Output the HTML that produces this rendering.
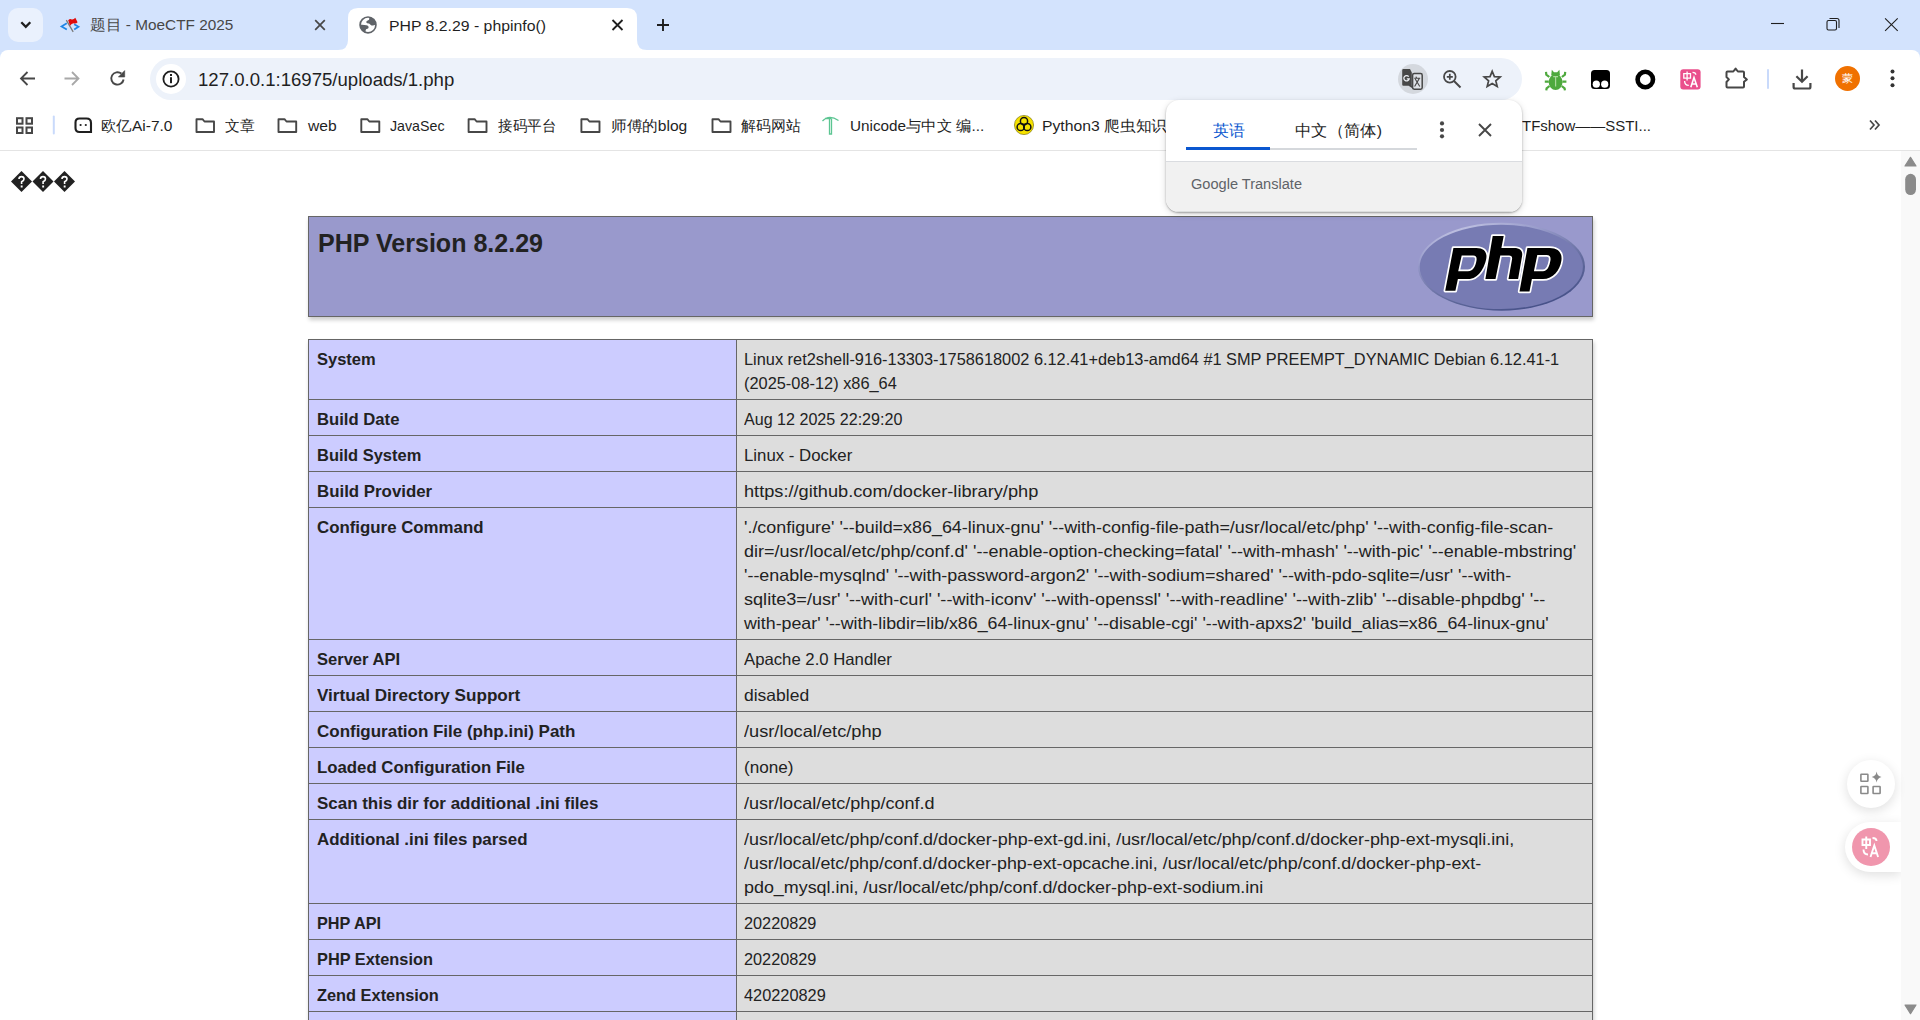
<!DOCTYPE html>
<html><head><meta charset="utf-8">
<style>
*{box-sizing:border-box}
html,body{margin:0;padding:0}
body{width:1920px;height:1020px;overflow:hidden;position:relative;background:#fff;font-family:"Liberation Sans",sans-serif;color:#1f1f1f}
.a{position:absolute}
svg.i{position:absolute;overflow:visible}
.t{position:absolute;white-space:pre}
</style></head><body>
<!-- ===== tab strip ===== -->
<div class="a" style="left:0;top:0;width:1920px;height:62px;background:#d3e3fd"></div>
<!-- toolbar + bookmarks white with rounded top corners -->
<div class="a" style="left:0;top:50px;width:1920px;height:100px;background:#fff;border-radius:8px 8px 0 0"></div>
<div class="a" style="left:0;top:150px;width:1920px;height:1px;background:#e4e4e4"></div>
<!-- tab search button -->
<div class="a" style="left:8px;top:8px;width:35px;height:34px;border-radius:10px;background:#eaf1fd"></div>
<svg class="i" style="left:0;top:0" width="50" height="50"><path d="M21.3 22.3 L25.8 26.8 L30.3 22.3" fill="none" stroke="#1f1f1f" stroke-width="2.3"/></svg>
<!-- inactive tab favicon (MoeCTF) -->
<svg class="i" style="left:58px;top:15px" width="24" height="20">
 <path d="M8.8 8.3 L3.5 11.5 L8.8 14.6" fill="none" stroke="#1f86e6" stroke-width="1.7"/>
 <path d="M16.2 9.2 L20.5 11.8 L16.2 14.4" fill="none" stroke="#1f86e6" stroke-width="1.7"/>
 <path d="M8.3 5.2 L15.2 16.8" stroke="#7a7a7a" stroke-width="1.3"/>
 <path d="M10.2 5.2 Q12 3.4 13.8 4.4 Q15.8 4.6 17.3 2.8 L19.6 7.3 Q18 9 15.5 8.3 Q13.6 8.3 12 10.8 Z" fill="#e00b0b"/>
</svg>
<!-- inactive close -->
<svg class="i" style="left:0;top:0" width="700" height="50"><path d="M315.2 20.2 L324.8 29.8 M324.8 20.2 L315.2 29.8" stroke="#474747" stroke-width="1.7"/></svg>
<!-- active tab shape -->
<svg class="i" style="left:330px;top:0" width="345" height="52">
 <path d="M8 50 Q18 50 18 40 L18 18 Q18 8 28 8 L297 8 Q307 8 307 18 L307 40 Q307 50 317 50 Z" fill="#fff"/>
</svg>
<!-- globe -->
<svg class="i" style="left:359px;top:16px" width="18" height="18" viewBox="0 0 18 18">
 <defs><clipPath id="gc"><circle cx="9" cy="8.9" r="8"/></clipPath></defs>
 <circle cx="9" cy="8.9" r="8.75" fill="#5f6368"/>
 <circle cx="9" cy="8.9" r="7.1" fill="#fff"/>
 <g clip-path="url(#gc)" fill="#5f6368">
  <path d="M10.3 0 L10.2 3.3 C10 4.5 8.4 4.4 7.6 5.2 C7 6 7.3 7 8.2 7.3 L9.8 7.5 C10.8 7.7 11.2 8.7 12.1 9.3 C13.1 9.9 14.6 9.7 17 8.2 L18 0 Z"/>
  <path d="M0 8.5 L7.4 9.3 C8.8 9.5 9.6 10.3 9.6 11.3 C9.6 12.3 8.8 12.9 7.6 13.1 C6.6 13.3 6.4 14.6 6.8 18 L0 18 Z"/>
 </g>
</svg>
<!-- active close + new tab -->
<svg class="i" style="left:0;top:0" width="700" height="50">
 <path d="M612.5 20 L622.5 30 M622.5 20 L612.5 30" stroke="#1f1f1f" stroke-width="1.8"/>
 <path d="M663 19 L663 31 M657 25 L669 25" stroke="#1f1f1f" stroke-width="1.9"/>
</svg>
<!-- window controls -->
<svg class="i" style="left:1740px;top:0" width="180" height="50">
 <path d="M31 23.5 L44 23.5" stroke="#1f1f1f" stroke-width="1.1"/>
 <rect x="87" y="20.5" width="9.5" height="9.5" rx="1.5" fill="none" stroke="#1f1f1f" stroke-width="1.1"/>
 <path d="M89.5 18.5 L97 18.5 Q99 18.5 99 20.5 L99 28" fill="none" stroke="#1f1f1f" stroke-width="1.1"/>
 <path d="M145.1 18.4 L157.7 30.8 M157.7 18.4 L145.1 30.8" stroke="#1f1f1f" stroke-width="1.1"/>
</svg>
<!-- ===== toolbar ===== -->
<svg class="i" style="left:0;top:50px" width="150" height="50">
 <path d="M35 28.5 L21 28.5 M27.5 22 L21 28.5 L27.5 35" fill="none" stroke="#474747" stroke-width="1.8"/>
 <path d="M64.5 28.5 L78.5 28.5 M72 22 L78.5 28.5 L72 35" fill="none" stroke="#a8a8a8" stroke-width="1.8"/>
 <path d="M123.6 29.5 A6.2 6.2 0 1 1 121.4 23.6" fill="none" stroke="#474747" stroke-width="1.9"/>
 <path d="M124.7 20.6 L124.7 27 L118.4 27 Z" fill="#474747" stroke="#474747" stroke-width="0.6" stroke-linejoin="round"/>
</svg>
<div class="a" style="left:150px;top:58px;width:1372px;height:42px;border-radius:21px;background:#edf2fa"></div>
<div class="a" style="left:156px;top:64px;width:30px;height:30px;border-radius:15px;background:#fff"></div>
<svg class="i" style="left:150px;top:58px" width="50" height="42">
 <circle cx="21" cy="21" r="7.6" fill="none" stroke="#1f1f1f" stroke-width="1.8"/>
 <rect x="20" y="19.2" width="2" height="6" fill="#1f1f1f"/><rect x="20" y="16" width="2" height="2" fill="#1f1f1f"/>
</svg>
<!-- translate chip in omnibox -->
<div class="a" style="left:1398px;top:64px;width:30px;height:30px;border-radius:15px;background:#d4d8de"></div>
<svg class="i" style="left:1398px;top:64px" width="30" height="30">
 <rect x="14.6" y="9.6" width="9.6" height="15.6" rx="1.6" fill="#dfe2e7" stroke="#474747" stroke-width="1.5"/>
 <path d="M16.2 14.2 L22.2 14.2 M18 12.6 L18.6 14.2 M21.2 14.6 L16.6 22.5 M17.2 15 L21.8 22.5" fill="none" stroke="#474747" stroke-width="1.1"/>
 <path d="M5.4 5.1 L12 5.1 L13.8 8.4 L13.8 21.7 L15.9 25.2 L10.6 21.7 L5.4 21.7 Q4.2 21.7 4.2 20.5 L4.2 6.3 Q4.2 5.1 5.4 5.1 Z" fill="#474747"/>
 <path d="M10.7 12.6 A2.7 2.7 0 1 0 11.2 14.8 L8.8 14.8" fill="none" stroke="#eceef2" stroke-width="1.3"/>
</svg>
<svg class="i" style="left:1430px;top:58px" width="90" height="42">
 <circle cx="19.8" cy="18.8" r="5.8" fill="none" stroke="#474747" stroke-width="1.8"/>
 <path d="M24 23 L30.5 29.5" stroke="#474747" stroke-width="2"/>
 <path d="M19.8 15.8 L19.8 21.8 M16.8 18.8 L22.8 18.8" stroke="#474747" stroke-width="1.7"/>
 <path d="M62.2 13.3 L64.4 18.6 L70.2 19 L65.8 22.8 L67.2 28.4 L62.2 25.4 L57.2 28.4 L58.6 22.8 L54.2 19 L60 18.6 Z" fill="none" stroke="#474747" stroke-width="1.7" stroke-linejoin="miter"/>
</svg>
<!-- extension icons -->
<svg class="i" style="left:1540px;top:60px" width="240" height="40">
 <!-- bug -->
 <g fill="#4ea93d">
  <ellipse cx="15.6" cy="22.2" rx="6.9" ry="7.9"/>
  <path d="M11.2 15.5 L11.8 9.8 L14 12.3 L17.2 12.3 L19.4 9.8 L20 15.5 Z"/>
  <path d="M9.3 17 L6.3 14.6 L6 11.8 M8.8 21.6 L4.8 21.6 M9.5 26 L6.6 28.4 L6.3 30.4 M21.9 17 L24.9 14.6 L25.2 11.8 M22.4 21.6 L26.4 21.6 M21.7 26 L24.6 28.4 L24.9 30.4" stroke="#4ea93d" stroke-width="2.2" fill="none"/>
 </g>
 <path d="M13.2 16.6 L18 16.6 M15.6 16.6 L15.6 26.5" stroke="#aad99b" stroke-width="1.2"/>
 <!-- tampermonkey -->
 <rect x="51" y="10" width="19" height="19" rx="3.5" fill="#000"/>
 <circle cx="56.3" cy="24.2" r="3.6" fill="#fff"/><circle cx="64.7" cy="24.2" r="3.6" fill="#fff"/>
 <!-- ring -->
 <circle cx="105.3" cy="19.5" r="7.7" fill="none" stroke="#000" stroke-width="4.6"/>
 <!-- pink translate -->
 <rect x="140.3" y="9.3" width="20.3" height="20.3" rx="3" fill="#ea4f8c"/>
 <path d="M143.8 13.6 L150.5 13.6 L150.5 18.2 L143.8 18.2 Z M147.1 11.6 L147.1 20.6" fill="none" stroke="#fff" stroke-width="1.3"/>
 <path d="M152.5 12.3 Q155.8 12.3 155.8 14.8" fill="none" stroke="#fff" stroke-width="1.3"/>
 <path d="M144.6 21 Q144.6 25.3 148.8 25.3" fill="none" stroke="#fff" stroke-width="1.3"/>
 <path d="M150.8 27.3 L154 17.5 L157.3 27.3 M151.8 24 L156.3 24" fill="none" stroke="#fff" stroke-width="1.6"/>
 <!-- puzzle -->
 <path d="M187.5 11.5 L193.3 11.5 L195.6 8.6 L197.9 11.5 L203 11.5 Q204 11.5 204 12.5 L204 17 L206.9 19.4 L204 21.8 L204 26.5 Q204 27.5 203 27.5 L187.5 27.5 Q186.5 27.5 186.5 26.5 L186.5 22 L188.9 19.4 L186.5 17 L186.5 12.5 Q186.5 11.5 187.5 11.5 Z" fill="none" stroke="#474747" stroke-width="2" stroke-linejoin="round"/>
</svg>
<div class="a" style="left:1767px;top:69px;width:2px;height:20px;border-radius:1px;background:#c9dafb"></div>
<svg class="i" style="left:1780px;top:60px" width="140" height="40">
 <path d="M22 9.5 L22 21.8 M16.4 16.2 L22 21.8 L27.6 16.2" fill="none" stroke="#474747" stroke-width="2.2"/>
 <path d="M13.6 23 L13.6 27 Q13.6 28.5 15.1 28.5 L28.9 28.5 Q30.4 28.5 30.4 27 L30.4 23" fill="none" stroke="#474747" stroke-width="2.2"/>
 <circle cx="67.5" cy="18.5" r="12.5" fill="#f07100"/>
 <circle cx="112.5" cy="11.4" r="2" fill="#333"/><circle cx="112.5" cy="18.3" r="2" fill="#333"/><circle cx="112.5" cy="25.2" r="2" fill="#333"/>
</svg>
<div class="t" style="left:1842px;top:73px;font-size:11px;line-height:11px;color:#fff">蒙</div>
<!-- ===== bookmarks bar ===== -->
<svg class="i" style="left:0;top:100px" width="1900" height="50">
 <g fill="none" stroke="#474747" stroke-width="2">
  <rect x="17" y="18.2" width="5.5" height="5.5"/><rect x="26.5" y="18.2" width="5.5" height="5.5"/>
  <rect x="17" y="27.5" width="5.5" height="5.5"/><rect x="26.5" y="27.5" width="5.5" height="5.5"/>
 </g>
 <rect x="52.8" y="15.5" width="2" height="19" rx="1" fill="#c9dafb"/>
 <path d="M79.5 18.5 L86.5 18.5 Q91 18.5 91 23 L91 32 L79.5 32 Q75.5 32 75.5 28 L75.5 22.5 Q75.5 18.5 79.5 18.5 Z" fill="none" stroke="#1f1f1f" stroke-width="2.1"/>
 <circle cx="80.6" cy="25" r="1.1" fill="#1f1f1f"/><circle cx="85.8" cy="25" r="1.1" fill="#1f1f1f"/>
 <g fill="none" stroke="#474747" stroke-width="1.9" stroke-linejoin="round">
  <path d="M196.5 19.2 L202.5 19.2 L204.5 21.5 L214 21.5 L214 32 L196.5 32 Z"/>
  <path d="M278.5 19.2 L284.5 19.2 L286.5 21.5 L296.2 21.5 L296.2 32 L278.5 32 Z"/>
  <path d="M361.3 19.2 L367.3 19.2 L369.3 21.5 L379.3 21.5 L379.3 32 L361.3 32 Z"/>
  <path d="M468.6 19.2 L474.6 19.2 L476.6 21.5 L486.5 21.5 L486.5 32 L468.6 32 Z"/>
  <path d="M581.4 19.2 L587.4 19.2 L589.4 21.5 L599.5 21.5 L599.5 32 L581.4 32 Z"/>
  <path d="M712.5 19.2 L718.5 19.2 L720.5 21.5 L730.5 21.5 L730.5 32 L712.5 32 Z"/>
 </g>
 <path d="M822.5 21 Q829 14 838.5 20.5 M825 18.5 L831 18.5 M829.5 18.5 L829.5 34 L831.5 34 L831.5 18.5" fill="none" stroke="#5cc592" stroke-width="1.3"/>
 <circle cx="1024" cy="25" r="9.6" fill="#f6e200" stroke="#6b6400" stroke-width="0.6"/>
 <g fill="none" stroke="#111" stroke-width="1.5">
  <circle cx="1024" cy="21.2" r="3.6"/><circle cx="1020.7" cy="27" r="3.6"/><circle cx="1027.3" cy="27" r="3.6"/>
 </g>
 <circle cx="1024" cy="25" r="1.4" fill="#111"/>
 <path d="M1870 20.5 L1874 25 L1870 29.5 M1875 20.5 L1879 25 L1875 29.5" fill="none" stroke="#474747" stroke-width="1.7"/>
</svg>

<!-- ===== content extras ===== -->
<svg class="i" style="left:0;top:160px" width="90" height="40">
 <g fill="#222">
  <path d="M21.5 11 L32 21.5 L21.5 32 L11 21.5 Z"/>
  <path d="M43 11 L53.5 21.5 L43 32 L32.5 21.5 Z"/>
  <path d="M64.5 11 L75 21.5 L64.5 32 L54 21.5 Z"/>
 </g>
 <g fill="none" stroke="#fff" stroke-width="1.6">
  <path d="M19 19 Q19 16.6 21.5 16.6 Q24 16.6 24 19 Q24 20.6 21.6 21.8 L21.6 24"/>
  <path d="M40.5 19 Q40.5 16.6 43 16.6 Q45.5 16.6 45.5 19 Q45.5 20.6 43.1 21.8 L43.1 24"/>
  <path d="M62 19 Q62 16.6 64.5 16.6 Q67 16.6 67 19 Q67 20.6 64.6 21.8 L64.6 24"/>
 </g>
 <g fill="#fff"><rect x="20.7" y="25.5" width="1.9" height="2"/><rect x="42.2" y="25.5" width="1.9" height="2"/><rect x="63.7" y="25.5" width="1.9" height="2"/></g>
</svg>
<!-- scrollbar -->
<div class="a" style="left:1901px;top:151px;width:19px;height:869px;background:#f9f9f9"></div>
<svg class="i" style="left:1901px;top:151px" width="19" height="869">
 <path d="M4 15 L9.5 6.3 L15 15 Z" fill="#8b8b8b" stroke="#8b8b8b" stroke-width="1.2" stroke-linejoin="round"/>
 <rect x="4.2" y="22.8" width="10.8" height="21.2" rx="5.4" fill="#8b8b8b"/>
 <path d="M4 854 L9.5 862.7 L15 854 Z" fill="#8b8b8b" stroke="#8b8b8b" stroke-width="1.2" stroke-linejoin="round"/>
</svg>
<!-- floating buttons -->
<div class="a" style="left:1846.6px;top:760.4px;width:48px;height:48px;border-radius:24px;background:#fff;box-shadow:0 3px 12px rgba(0,0,0,0.13)"></div>
<svg class="i" style="left:1846.6px;top:760.4px" width="48" height="48">
 <g fill="none" stroke="#8a8a8a" stroke-width="1.6">
  <rect x="13.9" y="14.3" width="7" height="7" rx="0.5"/>
  <rect x="13.9" y="26.5" width="7" height="7" rx="0.5"/>
  <rect x="26.1" y="26.5" width="7" height="7" rx="0.5"/>
 </g>
 <path d="M29.6 11.5 Q30.2 16 34.5 17 Q30.2 18 29.6 22.5 Q29 18 24.7 17 Q29 16 29.6 11.5 Z" fill="#8a8a8a"/>
</svg>
<div class="a" style="left:1845px;top:822px;width:56px;height:50px;border-radius:25px 0 0 25px;background:#fff;box-shadow:0 3px 12px rgba(0,0,0,0.13)"></div>
<div class="a" style="left:1901px;top:815px;width:19px;height:70px;background:#f9f9f9"></div>
<div class="a" style="left:1851.7px;top:828px;width:38px;height:38px;border-radius:19px;background:#f096ad"></div>
<svg class="i" style="left:1851.7px;top:828px" width="38" height="38">
 <g fill="none" stroke="#fff" stroke-width="1.9">
  <path d="M10.5 11.5 L18 11.5 L18 17 L10.5 17 Z M14.25 8.5 L14.25 21"/>
  <path d="M20.5 10 Q24.5 10 24.5 13"/>
  <path d="M11.5 21.5 Q11.5 26.5 16 26.5"/>
  <path d="M18.5 29 L22.3 17.5 L26.1 29 M19.7 25.2 L24.9 25.2"/>
 </g>
</svg>

<!-- php logo -->
<svg class="i" style="left:0;top:0;z-index:1" width="1920" height="400">
 <defs>
  <radialGradient id="lg" cx="0.3" cy="0.15" r="0.95">
   <stop offset="0" stop-color="#c4c6e4"/><stop offset="0.45" stop-color="#9a9dcc"/><stop offset="0.8" stop-color="#5d6699"/><stop offset="1" stop-color="#3f4a83"/>
  </radialGradient>
 </defs>
 <ellipse cx="1501.5" cy="266.7" rx="83.5" ry="44" fill="url(#lg)"/>
 <ellipse cx="1501.3" cy="266.9" rx="81.6" ry="42.2" fill="#777bb3"/>
 <g fill="#000" stroke="#fff" stroke-width="3.4" stroke-linejoin="round" fill-rule="evenodd" paint-order="stroke">
  <path d="M1453.4 247.9 L1476.4 247.9 C1484 247.9 1487.5 252 1486.2 259 C1484.6 267 1479 279.1 1468 279.1 L1457.9 279.1 L1455.4 290.8 L1445.2 290.8 Z M1461.7 255.5 L1473.2 255.5 C1476.5 255.5 1477 258 1476.4 261 C1475.6 265.5 1473.5 271.2 1468 271.2 L1458.2 271.2 Z"/>
  <path d="M1492.7 235.9 L1503.7 235.9 L1501.4 247.9 L1514 247.9 C1521 247.9 1523 251.5 1522 256.5 L1518.1 279.1 L1508.5 279.1 L1512 259.5 C1512.5 256.5 1511.5 255.4 1509 255.4 L1500.3 255.4 L1495.5 279.1 L1485.4 279.1 Z"/>
  <path d="M1527.4 247.9 L1549.7 247.9 C1558 247.9 1562.5 252.5 1561.4 260.5 C1560 270.5 1553 279.1 1543 279.1 L1531.9 279.1 L1529.5 291.5 L1519.5 291.5 Z M1537.3 255.1 L1546.5 255.1 C1550 255.1 1551 257.5 1550.4 260.5 C1549.5 266 1547.5 271.2 1543 271.2 L1533.9 271.2 Z"/>
 </g>
</svg>

<div class="a" style="left:308px;top:216px;width:1285px;height:101px;background:#99c;border:1px solid #666;box-shadow:1.4px 2.75px 4px #ccc"></div>
<div class="a" style="left:308px;top:339px;width:1285px;height:701px;box-shadow:1.4px 2.75px 4px #ccc;background:#666"></div>
<div class="a" style="left:309px;top:340px;width:427px;height:59px;background:#ccf;"></div>
<div class="a" style="left:737px;top:340px;width:855px;height:59px;background:#ddd;"></div>
<div class="a" style="left:309px;top:400px;width:427px;height:35px;background:#ccf;"></div>
<div class="a" style="left:737px;top:400px;width:855px;height:35px;background:#ddd;"></div>
<div class="a" style="left:309px;top:436px;width:427px;height:35px;background:#ccf;"></div>
<div class="a" style="left:737px;top:436px;width:855px;height:35px;background:#ddd;"></div>
<div class="a" style="left:309px;top:472px;width:427px;height:35px;background:#ccf;"></div>
<div class="a" style="left:737px;top:472px;width:855px;height:35px;background:#ddd;"></div>
<div class="a" style="left:309px;top:508px;width:427px;height:131px;background:#ccf;"></div>
<div class="a" style="left:737px;top:508px;width:855px;height:131px;background:#ddd;"></div>
<div class="a" style="left:309px;top:640px;width:427px;height:35px;background:#ccf;"></div>
<div class="a" style="left:737px;top:640px;width:855px;height:35px;background:#ddd;"></div>
<div class="a" style="left:309px;top:676px;width:427px;height:35px;background:#ccf;"></div>
<div class="a" style="left:737px;top:676px;width:855px;height:35px;background:#ddd;"></div>
<div class="a" style="left:309px;top:712px;width:427px;height:35px;background:#ccf;"></div>
<div class="a" style="left:737px;top:712px;width:855px;height:35px;background:#ddd;"></div>
<div class="a" style="left:309px;top:748px;width:427px;height:35px;background:#ccf;"></div>
<div class="a" style="left:737px;top:748px;width:855px;height:35px;background:#ddd;"></div>
<div class="a" style="left:309px;top:784px;width:427px;height:35px;background:#ccf;"></div>
<div class="a" style="left:737px;top:784px;width:855px;height:35px;background:#ddd;"></div>
<div class="a" style="left:309px;top:820px;width:427px;height:83px;background:#ccf;"></div>
<div class="a" style="left:737px;top:820px;width:855px;height:83px;background:#ddd;"></div>
<div class="a" style="left:309px;top:904px;width:427px;height:35px;background:#ccf;"></div>
<div class="a" style="left:737px;top:904px;width:855px;height:35px;background:#ddd;"></div>
<div class="a" style="left:309px;top:940px;width:427px;height:35px;background:#ccf;"></div>
<div class="a" style="left:737px;top:940px;width:855px;height:35px;background:#ddd;"></div>
<div class="a" style="left:309px;top:976px;width:427px;height:35px;background:#ccf;"></div>
<div class="a" style="left:737px;top:976px;width:855px;height:35px;background:#ddd;"></div>
<div class="a" style="left:309px;top:1012px;width:427px;height:35px;background:#ccf;"></div>
<div class="a" style="left:737px;top:1012px;width:855px;height:35px;background:#ddd;"></div>
<div class="t" style="left:318px;top:230.84px;font-family:'Liberation Sans',sans-serif;font-size:25px;line-height:25px;font-weight:bold;color:#222;transform:scaleX(1.0015);transform-origin:0 0;">PHP Version 8.2.29</div>
<div class="t" style="left:317px;top:350.73px;font-family:'Liberation Sans',sans-serif;font-size:16.5px;line-height:16.5px;font-weight:bold;color:#222;transform:scaleX(0.9999);transform-origin:0 0;">System</div>
<div class="t" style="left:743.8px;top:350.73px;font-family:'Liberation Sans',sans-serif;font-size:16.5px;line-height:16.5px;font-weight:normal;color:#222;transform:scaleX(0.9906);transform-origin:0 0;">Linux ret2shell-916-13303-1758618002 6.12.41+deb13-amd64 #1 SMP PREEMPT_DYNAMIC Debian 6.12.41-1</div>
<div class="t" style="left:743.8px;top:374.73px;font-family:'Liberation Sans',sans-serif;font-size:16.5px;line-height:16.5px;font-weight:normal;color:#222;transform:scaleX(0.9915);transform-origin:0 0;">(2025-08-12) x86_64</div>
<div class="t" style="left:317px;top:410.73px;font-family:'Liberation Sans',sans-serif;font-size:16.5px;line-height:16.5px;font-weight:bold;color:#222;transform:scaleX(1.0099);transform-origin:0 0;">Build Date</div>
<div class="t" style="left:743.8px;top:410.73px;font-family:'Liberation Sans',sans-serif;font-size:16.5px;line-height:16.5px;font-weight:normal;color:#222;transform:scaleX(0.9753);transform-origin:0 0;">Aug 12 2025 22:29:20</div>
<div class="t" style="left:317px;top:446.73px;font-family:'Liberation Sans',sans-serif;font-size:16.5px;line-height:16.5px;font-weight:bold;color:#222;transform:scaleX(0.9978);transform-origin:0 0;">Build System</div>
<div class="t" style="left:743.8px;top:446.73px;font-family:'Liberation Sans',sans-serif;font-size:16.5px;line-height:16.5px;font-weight:normal;color:#222;transform:scaleX(1.0181);transform-origin:0 0;">Linux - Docker</div>
<div class="t" style="left:317px;top:482.73px;font-family:'Liberation Sans',sans-serif;font-size:16.5px;line-height:16.5px;font-weight:bold;color:#222;transform:scaleX(1.0214);transform-origin:0 0;">Build Provider</div>
<div class="t" style="left:743.8px;top:482.73px;font-family:'Liberation Sans',sans-serif;font-size:16.5px;line-height:16.5px;font-weight:normal;color:#222;transform:scaleX(1.1027);transform-origin:0 0;">https://github.com/docker-library/php</div>
<div class="t" style="left:317px;top:518.73px;font-family:'Liberation Sans',sans-serif;font-size:16.5px;line-height:16.5px;font-weight:bold;color:#222;transform:scaleX(1.0204);transform-origin:0 0;">Configure Command</div>
<div class="t" style="left:743.8px;top:518.73px;font-family:'Liberation Sans',sans-serif;font-size:16.5px;line-height:16.5px;font-weight:normal;color:#222;transform:scaleX(1.0852);transform-origin:0 0;">&#x27;./configure&#x27; &#x27;--build=x86_64-linux-gnu&#x27; &#x27;--with-config-file-path=/usr/local/etc/php&#x27; &#x27;--with-config-file-scan-</div>
<div class="t" style="left:743.8px;top:542.73px;font-family:'Liberation Sans',sans-serif;font-size:16.5px;line-height:16.5px;font-weight:normal;color:#222;transform:scaleX(1.0908);transform-origin:0 0;">dir=/usr/local/etc/php/conf.d&#x27; &#x27;--enable-option-checking=fatal&#x27; &#x27;--with-mhash&#x27; &#x27;--with-pic&#x27; &#x27;--enable-mbstring&#x27;</div>
<div class="t" style="left:743.8px;top:566.73px;font-family:'Liberation Sans',sans-serif;font-size:16.5px;line-height:16.5px;font-weight:normal;color:#222;transform:scaleX(1.0853);transform-origin:0 0;">&#x27;--enable-mysqlnd&#x27; &#x27;--with-password-argon2&#x27; &#x27;--with-sodium=shared&#x27; &#x27;--with-pdo-sqlite=/usr&#x27; &#x27;--with-</div>
<div class="t" style="left:743.8px;top:590.73px;font-family:'Liberation Sans',sans-serif;font-size:16.5px;line-height:16.5px;font-weight:normal;color:#222;transform:scaleX(1.0969);transform-origin:0 0;">sqlite3=/usr&#x27; &#x27;--with-curl&#x27; &#x27;--with-iconv&#x27; &#x27;--with-openssl&#x27; &#x27;--with-readline&#x27; &#x27;--with-zlib&#x27; &#x27;--disable-phpdbg&#x27; &#x27;--</div>
<div class="t" style="left:743.8px;top:614.73px;font-family:'Liberation Sans',sans-serif;font-size:16.5px;line-height:16.5px;font-weight:normal;color:#222;transform:scaleX(1.0780);transform-origin:0 0;">with-pear&#x27; &#x27;--with-libdir=lib/x86_64-linux-gnu&#x27; &#x27;--disable-cgi&#x27; &#x27;--with-apxs2&#x27; &#x27;build_alias=x86_64-linux-gnu&#x27;</div>
<div class="t" style="left:317px;top:650.73px;font-family:'Liberation Sans',sans-serif;font-size:16.5px;line-height:16.5px;font-weight:bold;color:#222;transform:scaleX(1.0017);transform-origin:0 0;">Server API</div>
<div class="t" style="left:743.8px;top:650.73px;font-family:'Liberation Sans',sans-serif;font-size:16.5px;line-height:16.5px;font-weight:normal;color:#222;transform:scaleX(1.0133);transform-origin:0 0;">Apache 2.0 Handler</div>
<div class="t" style="left:317px;top:686.73px;font-family:'Liberation Sans',sans-serif;font-size:16.5px;line-height:16.5px;font-weight:bold;color:#222;transform:scaleX(1.0372);transform-origin:0 0;">Virtual Directory Support</div>
<div class="t" style="left:743.8px;top:686.73px;font-family:'Liberation Sans',sans-serif;font-size:16.5px;line-height:16.5px;font-weight:normal;color:#222;transform:scaleX(1.0591);transform-origin:0 0;">disabled</div>
<div class="t" style="left:317px;top:722.73px;font-family:'Liberation Sans',sans-serif;font-size:16.5px;line-height:16.5px;font-weight:bold;color:#222;transform:scaleX(1.0289);transform-origin:0 0;">Configuration File (php.ini) Path</div>
<div class="t" style="left:743.8px;top:722.73px;font-family:'Liberation Sans',sans-serif;font-size:16.5px;line-height:16.5px;font-weight:normal;color:#222;transform:scaleX(1.1039);transform-origin:0 0;">/usr/local/etc/php</div>
<div class="t" style="left:317px;top:758.73px;font-family:'Liberation Sans',sans-serif;font-size:16.5px;line-height:16.5px;font-weight:bold;color:#222;transform:scaleX(1.0166);transform-origin:0 0;">Loaded Configuration File</div>
<div class="t" style="left:743.8px;top:758.73px;font-family:'Liberation Sans',sans-serif;font-size:16.5px;line-height:16.5px;font-weight:normal;color:#222;transform:scaleX(1.0377);transform-origin:0 0;">(none)</div>
<div class="t" style="left:317px;top:794.73px;font-family:'Liberation Sans',sans-serif;font-size:16.5px;line-height:16.5px;font-weight:bold;color:#222;transform:scaleX(1.0265);transform-origin:0 0;">Scan this dir for additional .ini files</div>
<div class="t" style="left:743.8px;top:794.73px;font-family:'Liberation Sans',sans-serif;font-size:16.5px;line-height:16.5px;font-weight:normal;color:#222;transform:scaleX(1.0937);transform-origin:0 0;">/usr/local/etc/php/conf.d</div>
<div class="t" style="left:317px;top:830.73px;font-family:'Liberation Sans',sans-serif;font-size:16.5px;line-height:16.5px;font-weight:bold;color:#222;transform:scaleX(1.0250);transform-origin:0 0;">Additional .ini files parsed</div>
<div class="t" style="left:743.8px;top:830.73px;font-family:'Liberation Sans',sans-serif;font-size:16.5px;line-height:16.5px;font-weight:normal;color:#222;transform:scaleX(1.0850);transform-origin:0 0;">/usr/local/etc/php/conf.d/docker-php-ext-gd.ini, /usr/local/etc/php/conf.d/docker-php-ext-mysqli.ini,</div>
<div class="t" style="left:743.8px;top:854.73px;font-family:'Liberation Sans',sans-serif;font-size:16.5px;line-height:16.5px;font-weight:normal;color:#222;transform:scaleX(1.0818);transform-origin:0 0;">/usr/local/etc/php/conf.d/docker-php-ext-opcache.ini, /usr/local/etc/php/conf.d/docker-php-ext-</div>
<div class="t" style="left:743.8px;top:878.73px;font-family:'Liberation Sans',sans-serif;font-size:16.5px;line-height:16.5px;font-weight:normal;color:#222;transform:scaleX(1.0845);transform-origin:0 0;">pdo_mysql.ini, /usr/local/etc/php/conf.d/docker-php-ext-sodium.ini</div>
<div class="t" style="left:317px;top:914.73px;font-family:'Liberation Sans',sans-serif;font-size:16.5px;line-height:16.5px;font-weight:bold;color:#222;transform:scaleX(0.9830);transform-origin:0 0;">PHP API</div>
<div class="t" style="left:743.8px;top:914.73px;font-family:'Liberation Sans',sans-serif;font-size:16.5px;line-height:16.5px;font-weight:normal;color:#222;transform:scaleX(0.9861);transform-origin:0 0;">20220829</div>
<div class="t" style="left:317px;top:950.73px;font-family:'Liberation Sans',sans-serif;font-size:16.5px;line-height:16.5px;font-weight:bold;color:#222;transform:scaleX(0.9899);transform-origin:0 0;">PHP Extension</div>
<div class="t" style="left:743.8px;top:950.73px;font-family:'Liberation Sans',sans-serif;font-size:16.5px;line-height:16.5px;font-weight:normal;color:#222;transform:scaleX(0.9861);transform-origin:0 0;">20220829</div>
<div class="t" style="left:317px;top:986.73px;font-family:'Liberation Sans',sans-serif;font-size:16.5px;line-height:16.5px;font-weight:bold;color:#222;transform:scaleX(0.9914);transform-origin:0 0;">Zend Extension</div>
<div class="t" style="left:743.8px;top:986.73px;font-family:'Liberation Sans',sans-serif;font-size:16.5px;line-height:16.5px;font-weight:normal;color:#222;transform:scaleX(0.9904);transform-origin:0 0;">420220829</div>
<div class="t" style="left:317px;top:1022.73px;font-family:'Liberation Sans',sans-serif;font-size:16.5px;line-height:16.5px;font-weight:bold;color:#222;transform:scaleX(1.0848);transform-origin:0 0;">Zend Extension Build</div>
<div class="t" style="left:743.8px;top:1022.73px;font-family:'Liberation Sans',sans-serif;font-size:16.5px;line-height:16.5px;font-weight:normal;color:#222;transform:scaleX(1.0642);transform-origin:0 0;">API420220829,NTS</div>
<div class="t" style="left:90px;top:18.04px;font-family:'Liberation Sans',sans-serif;font-size:14.6px;line-height:14.6px;font-weight:normal;color:#474747;transform:scaleX(1.0517);transform-origin:0 0;">题目 - MoeCTF 2025</div>
<div class="t" style="left:388.5px;top:17.90px;font-family:'Liberation Sans',sans-serif;font-size:15px;line-height:15px;font-weight:normal;color:#1f1f1f;transform:scaleX(1.0538);transform-origin:0 0;">PHP 8.2.29 - phpinfo()</div>
<div class="t" style="left:198px;top:70.54px;font-family:'Liberation Sans',sans-serif;font-size:18.5px;line-height:18.5px;font-weight:normal;color:#1f1f1f;transform:scaleX(1.0046);transform-origin:0 0;">127.0.0.1:16975/uploads/1.php</div>
<div class="t" style="left:100.6px;top:118.30px;font-family:'Liberation Sans',sans-serif;font-size:15px;line-height:15px;font-weight:normal;color:#1f1f1f;transform:scaleX(1.0320);transform-origin:0 0;">欧亿Ai-7.0</div>
<div class="t" style="left:225.3px;top:118.30px;font-family:'Liberation Sans',sans-serif;font-size:15px;line-height:15px;font-weight:normal;color:#1f1f1f;transform:scaleX(0.9900);transform-origin:0 0;">文章</div>
<div class="t" style="left:307.8px;top:118.30px;font-family:'Liberation Sans',sans-serif;font-size:15px;line-height:15px;font-weight:normal;color:#1f1f1f;transform:scaleX(1.0425);transform-origin:0 0;">web</div>
<div class="t" style="left:390px;top:118.30px;font-family:'Liberation Sans',sans-serif;font-size:15px;line-height:15px;font-weight:normal;color:#1f1f1f;transform:scaleX(0.9471);transform-origin:0 0;">JavaSec</div>
<div class="t" style="left:498px;top:118.30px;font-family:'Liberation Sans',sans-serif;font-size:15px;line-height:15px;font-weight:normal;color:#1f1f1f;transform:scaleX(0.9667);transform-origin:0 0;">接码平台</div>
<div class="t" style="left:610.6px;top:118.30px;font-family:'Liberation Sans',sans-serif;font-size:15px;line-height:15px;font-weight:normal;color:#1f1f1f;transform:scaleX(1.0401);transform-origin:0 0;">师傅的blog</div>
<div class="t" style="left:741.3px;top:118.30px;font-family:'Liberation Sans',sans-serif;font-size:15px;line-height:15px;font-weight:normal;color:#1f1f1f;transform:scaleX(0.9950);transform-origin:0 0;">解码网站</div>
<div class="t" style="left:849.7px;top:118.30px;font-family:'Liberation Sans',sans-serif;font-size:15px;line-height:15px;font-weight:normal;color:#1f1f1f;transform:scaleX(1.0196);transform-origin:0 0;">Unicode与中文 编...</div>
<div class="t" style="left:1041.8px;top:118.30px;font-family:'Liberation Sans',sans-serif;font-size:15px;line-height:15px;font-weight:normal;color:#1f1f1f;transform:scaleX(1.0485);transform-origin:0 0;">Python3 爬虫知识</div>
<div class="t" style="left:1522px;top:118.30px;font-family:'Liberation Sans',sans-serif;font-size:15px;line-height:15px;font-weight:normal;color:#1f1f1f;transform:scaleX(0.9985);transform-origin:0 0;">TFshow——SSTI...</div>

<!-- ===== translate popup ===== -->
<div class="a" style="left:1166px;top:100px;width:356px;height:112px;border-radius:13px;background:#fff;box-shadow:0 1px 2px rgba(0,0,0,0.3),0 2px 7px rgba(0,0,0,0.15);overflow:hidden">
 <div class="a" style="left:0;top:61px;width:356px;height:51px;background:#f1f1f1;border-top:1px solid #dadce0;border-bottom:1px solid #dcdede"></div>
 <div class="a" style="left:20px;top:48px;width:231px;height:2px;background:#d5d8dc"></div>
 <div class="a" style="left:20px;top:47px;width:84px;height:3px;background:#0b57d0"></div>
</div>
<svg class="i" style="left:1166px;top:100px" width="356" height="111">
 <circle cx="276" cy="23.4" r="2.1" fill="#474747"/><circle cx="276" cy="30" r="2.1" fill="#474747"/><circle cx="276" cy="36.3" r="2.1" fill="#474747"/>
 <path d="M313 24 L325 36 M325 24 L313 36" stroke="#474747" stroke-width="1.9"/>
</svg>
<div class="t" style="left:1212.7px;top:123.38px;font-family:'Liberation Sans',sans-serif;font-size:15.5px;line-height:15.5px;font-weight:normal;color:#0b57d0;transform:scaleX(0.9969);transform-origin:0 0;">英语</div>
<div class="t" style="left:1295.4px;top:123.38px;font-family:'Liberation Sans',sans-serif;font-size:15.5px;line-height:15.5px;font-weight:normal;color:#1f1f1f;transform:scaleX(1.0215);transform-origin:0 0;">中文（简体)</div>
<div class="t" style="left:1191px;top:175.83px;font-family:'Liberation Sans',sans-serif;font-size:15.2px;line-height:15.2px;font-weight:normal;color:#5f6368;transform:scaleX(0.9596);transform-origin:0 0;">Google Translate</div>
</body></html>
